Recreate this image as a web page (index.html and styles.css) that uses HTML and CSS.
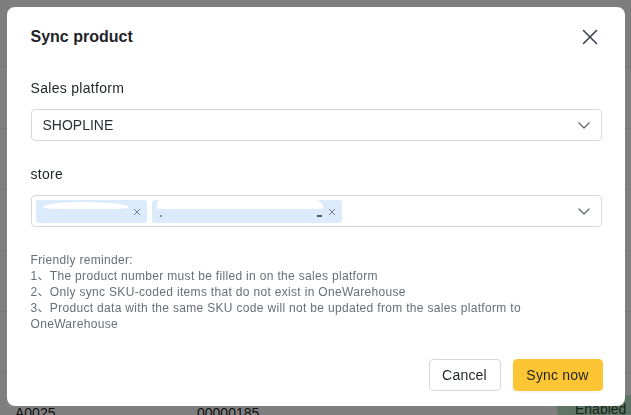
FILE: index.html
```html
<!DOCTYPE html>
<html lang="en">
<head>
<meta charset="utf-8">
<title>Sync product</title>
<link rel="stylesheet" href="styles.css">
</head>
<body>
<div class="page">
  <div class="bg-head"></div>
  <div class="bg-row"></div>
  <div class="bg-row"></div>
  <div class="bg-row"></div>
  <div class="bg-row"></div>
  <div class="bg-row"></div>
  <div class="bg-row data">
    <span class="cell-code">A0025</span>
    <span class="cell-num">00000185</span>
    <span class="badge">Enabled</span>
  </div>
</div>

<div class="overlay">
  <div class="modal">
    <div class="modal-header">
      <h2 class="modal-title">Sync product</h2>
      <button class="close-btn" aria-label="Close">
        <svg width="16" height="16" viewBox="0 0 16 16"><path d="M1.5 1.5L14.5 14.5M14.5 1.5L1.5 14.5" stroke="#3c4350" stroke-width="1.6" stroke-linecap="round" fill="none"/></svg>
      </button>
    </div>
    <div class="modal-body">
      <div class="field">
        <label class="field-label">Sales platform</label>
        <div class="select">
          <span class="select-value">SHOPLINE</span>
          <svg class="chevron" width="12" height="7" viewBox="0 0 12 7"><path d="M1 1L6 6L11 1" stroke="#5f6670" stroke-width="1.3" fill="none" stroke-linecap="round" stroke-linejoin="round"/></svg>
        </div>
      </div>
      <div class="field">
        <label class="field-label">store</label>
        <div class="select multi">
          <div class="tags">
            <span class="tag tag-a">
              <span class="blob blob-a"></span>
              <svg class="tag-x" width="8" height="8" viewBox="0 0 8 8"><path d="M1 1L7 7M7 1L1 7" stroke="#7a7f88" stroke-width="1" fill="none"/></svg>
            </span>
            <span class="tag tag-b">
              <span class="blob blob-b"></span>
              <span class="dot"></span>
              <span class="dash"></span>
              <svg class="tag-x" width="8" height="8" viewBox="0 0 8 8"><path d="M1 1L7 7M7 1L1 7" stroke="#7a7f88" stroke-width="1" fill="none"/></svg>
            </span>
          </div>
          <svg class="chevron" width="12" height="7" viewBox="0 0 12 7"><path d="M1 1L6 6L11 1" stroke="#5f6670" stroke-width="1.3" fill="none" stroke-linecap="round" stroke-linejoin="round"/></svg>
        </div>
      </div>
      <div class="reminder">
        <p>Friendly reminder:</p>
        <p>1、The product number must be filled in on the sales platform</p>
        <p>2、Only sync SKU-coded items that do not exist in OneWarehouse</p>
        <p>3、Product data with the same SKU code will not be updated from the sales platform to<br>OneWarehouse</p>
      </div>
    </div>
    <div class="modal-footer">
      <button class="btn btn-default">Cancel</button>
      <button class="btn btn-primary">Sync now</button>
    </div>
  </div>
</div>
</body>
</html>
```

FILE: styles.css
```css
* { box-sizing: border-box; }

html, body {
  margin: 0;
  padding: 0;
  width: 631px;
  height: 415px;
  overflow: hidden;
  font-family: "Liberation Sans", Arial, "Noto Sans CJK SC", sans-serif;
  background: #ffffff;
}

/* underlying page */
.page {
  display: flex;
  flex-direction: column;
}
.bg-head {
  height: 68px;
  border-bottom: 1px solid #eeeeee;
  background: #fbfbfb;
}
.bg-row {
  height: 61px;
  border-bottom: 1px solid #eeeeee;
}
.bg-row.data {
  display: flex;
  align-items: flex-start;
  padding-top: 30px;
  font-size: 14px;
  line-height: 20px;
  color: #222;
}
.cell-code { flex: none; margin-left: 15px; width: 182px; }
.cell-num { flex: none; width: 360px; }
.badge {
  flex: none;
  margin-top: -8px;
  background: #bfe8cb;
  color: #1e4d2e;
  border-radius: 14px;
  padding: 4px 18px;
  font-size: 14px;
}

/* overlay + modal */
.overlay {
  position: fixed;
  inset: 0;
  background: rgba(0, 0, 0, 0.5);
  display: flex;
  justify-content: center;
  align-items: flex-start;
  padding-top: 7px;
}

.modal {
  width: 618px;
  height: 399px;
  background: #ffffff;
  border-radius: 8px;
  display: flex;
  flex-direction: column;
}

.modal-header {
  display: flex;
  align-items: center;
  justify-content: space-between;
  padding: 18px 27px 0 24px;
}
.modal-title {
  margin: 0;
  font-size: 16px;
  line-height: 24px;
  font-weight: 700;
  color: #1f2329;
}
.close-btn {
  border: 0;
  background: none;
  padding: 0;
  width: 16px;
  height: 16px;
  display: flex;
}

.modal-body {
  padding: 0 23px 0 24px;
  margin-top: 28px;
  display: flex;
  flex-direction: column;
  gap: 22px;
}

.field {
  display: flex;
  flex-direction: column;
  gap: 10px;
}
.field-label {
  font-size: 14px;
  line-height: 22px;
  color: #1f2329;
  letter-spacing: 0.3px;
}

.select {
  height: 32px;
  border: 1px solid #d5d8de;
  border-radius: 4px;
  display: flex;
  align-items: center;
  justify-content: space-between;
  padding: 0 11px 0 11px;
}
.select-value {
  font-size: 14px;
  color: #2b2f36;
}
.chevron { flex: none; }

.select.multi {
  padding-left: 4px;
}
.tags {
  display: flex;
  gap: 5px;
}
.tag {
  position: relative;
  height: 23px;
  background: #dcebfb;
  border-radius: 3px;
  display: flex;
  align-items: center;
  justify-content: flex-end;
  padding-right: 6px;
}
.tag-a { width: 111px; }
.tag-b { width: 190px; }
.tag-x { margin-top: 2px; }

.blob {
  position: absolute;
  background: #ffffff;
}
.blob-a {
  left: 7px;
  top: 2px;
  width: 86px;
  height: 7px;
  border-radius: 50% 60% 40% 40% / 80% 80% 20% 20%;
}
.blob-b {
  left: 5px;
  top: 0;
  width: 166px;
  height: 9px;
  border-radius: 6px 10px 2px 2px;
}
.dot {
  position: absolute;
  left: 8px;
  top: 15px;
  width: 2px;
  height: 2px;
  background: #8a9099;
}
.dash {
  position: absolute;
  left: 165px;
  top: 15px;
  width: 5px;
  height: 2px;
  background: #555b63;
}

.reminder {
  margin-top: 3px;
  font-size: 12px;
  line-height: 16px;
  color: #686e78;
  letter-spacing: 0.32px;
}
.reminder p { margin: 0; }

.modal-footer {
  margin-top: auto;
  display: flex;
  justify-content: flex-end;
  gap: 12px;
  padding: 0 22px 15px 0;
}
.btn {
  height: 32px;
  border-radius: 4px;
  font-family: inherit;
  font-size: 14px;
  color: #1f2329;
  padding: 0;
  letter-spacing: 0.2px;
}
.btn-default {
  width: 72px;
  background: #ffffff;
  border: 1px solid #d5d8de;
}
.btn-primary {
  width: 90px;
  background: #fdc533;
  border: 1px solid #fdc533;
  box-shadow: 0 2px 0 rgba(0, 0, 0, 0.03);
}
```
